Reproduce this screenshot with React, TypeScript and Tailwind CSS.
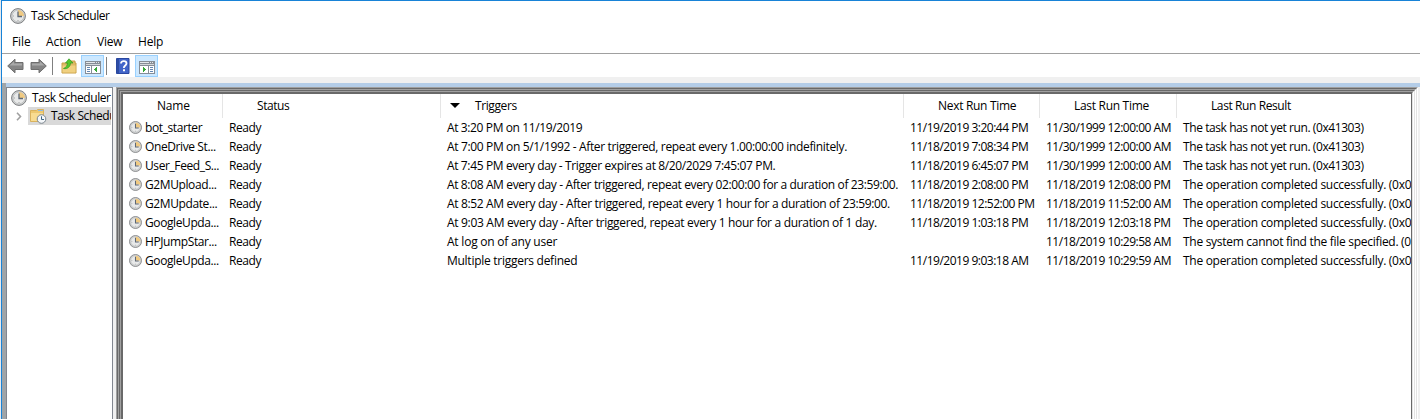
import type { ReactNode } from "react";

function Clock({ size }: { size: number }) {
  return (
    <svg width={size} height={size} viewBox="0 0 16 16" className="shrink-0">
      <circle cx="8" cy="8" r="7.4" fill="#cfd1d2" stroke="#7b7d7f" strokeWidth="1" />
      <circle cx="8" cy="8" r="5.8" fill="#e8e9e9" stroke="#b9bbbc" strokeWidth=".7" />
      <path d="M8 8V2A6 6 0 0 1 14 8Z" fill="#f0ca82" />
      <path d="M8 3.500V8.500H12" fill="none" stroke="#5d6774" strokeWidth="1.300" />
      <path d="M3 8h1M8 12v1" stroke="#a5a5a5" />
    </svg>
  );
}

function Arrow({ flip = false }: { flip?: boolean }) {
  return (
    <svg width="17" height="16" viewBox="0 0 17 16" className={flip ? "-scale-x-100" : ""}>
      <path d="M.7 8 8 1.200V4.500h8v7H8v3.300Z" fill="#858585" stroke="#6e6e6e" />
      <path d="M2.500 7.600 7 3.500V5.600H15v2Z" fill="#a9a9a9" />
    </svg>
  );
}

function FolderUp() {
  return (
    <svg width="16" height="16" viewBox="0 0 16 16">
      <path d="M1 5h7l1-2h5v2h1v10H1Z" fill="#dcb865" stroke="#c9a046" />
      <path d="M1.500 7.500h13V14.500h-13Z" fill="#f0d080" />
      <path d="M2.500 10.500C5 9.500 6.500 7.500 6.500 5H4.500L8 .8 12 5h-2.500C9.500 8.500 6.500 11.500 2.500 10.500Z" fill="#55c82c" stroke="#319a22" strokeWidth=".7" />
    </svg>
  );
}

function PaneIcon({ right = false }: { right?: boolean }) {
  return (
    <svg width="16" height="13" viewBox="0 0 16 13" shapeRendering="crispEdges" className="mt-[3px]">
      <path d="M0 0h16v13H0Z" fill="#868d96" />
      <path d="M1 1h9v1H1ZM11 1h1v1h-1ZM13 1h1v1h-1Z" fill="#e4e7ea" />
      <path d="M1 3h14v1H1Z" fill="#d4d7db" />
      <path d="M1 5h14v7H1Z" fill="#fff" />
      <g transform={right ? "matrix(-1 0 0 1 16 0)" : undefined}>
        <path d="M6 5h1v7H6Z" fill="#868d96" />
        <path d="M2 6h3v1H2ZM2 8h3v1H2ZM2 10h3v1H2Z" fill="#6286b3" />
        <path d="M12 6v5L9 8.500Z" fill="#35a735" />
      </g>
    </svg>
  );
}

function HelpIcon() {
  return (
    <svg width="14" height="16" viewBox="0 0 14 16">
      <path d="M.5.500h12.500v15H.5Z" fill="#4265c9" stroke="#2947a0" />
      <path d="M1 1h2v14H1Z" fill="#2d4ca3" />
      <path d="M5 5.500C5 2.400 10.500 2.400 10.500 5.500 10.500 7.500 7.800 7.500 7.800 10" fill="none" stroke="#fff" strokeWidth="1.800" />
      <path d="M7 11.300h2v2H7Z" fill="#fff" />
    </svg>
  );
}

function TaskFolder() {
  return (
    <svg width="17" height="16" viewBox="0 0 17 16" className="shrink-0">
      <path d="M.5 2.500h6l1-1h6v12H.5Z" fill="#edc86f" stroke="#d9b25d" />
      <path d="M8 2h5v1H8Z" fill="#8fbbe0" />
      <path d="M1 5h12v8H1Z" fill="#f8dc91" />
      <circle cx="11.500" cy="11" r="4.300" fill="#f4f7fa" stroke="#7a858e" />
      <path d="M11.500 8.300V11.500H14" fill="none" stroke="#3c6685" />
    </svg>
  );
}

const columns = [
  { label: "Name", cell: "w-[100px] tracking-[-0.2px]" },
  { label: "Status", cell: "w-[218px] tracking-[-0.45px]" },
  { label: "Triggers", cell: "w-[463px] tracking-[-0.4px]" },
  { label: "Next Run Time", cell: "w-[136px] tracking-[-0.3px]" },
  { label: "Last Run Time", cell: "w-[137px] tracking-[-0.3px]" },
];

const notRun = "The task has not yet run. (0x41303)";
const completed = "The operation completed successfully. (0x0)";

const tasks = [
  { name: "bot_starter", trigger: "At 3:20 PM on 11/19/2019", fit: "tracking-[-0.38px]", next: "11/19/2019 3:20:44 PM", last: "11/30/1999 12:00:00 AM", result: notRun },
  { name: "OneDrive St...", trigger: "At 7:00 PM on 5/1/1992 - After triggered, repeat every 1.00:00:00 indefinitely.", fit: "tracking-[-0.35px]", next: "11/18/2019 7:08:34 PM", last: "11/30/1999 12:00:00 AM", result: notRun },
  { name: "User_Feed_S...", trigger: "At 7:45 PM every day - Trigger expires at 8/20/2029 7:45:07 PM.", fit: "tracking-[-0.37px]", next: "11/18/2019 6:45:07 PM", last: "11/30/1999 12:00:00 AM", result: notRun },
  { name: "G2MUpload...", trigger: "At 8:08 AM every day - After triggered, repeat every 02:00:00 for a duration of 23:59:00.", fit: "tracking-[-0.37px]", next: "11/18/2019 2:08:00 PM", last: "11/18/2019 12:08:00 PM", result: completed },
  { name: "G2MUpdate...", trigger: "At 8:52 AM every day - After triggered, repeat every 1 hour for a duration of 23:59:00.", fit: "tracking-[-0.35px]", next: "11/18/2019 12:52:00 PM", last: "11/18/2019 11:52:00 AM", result: completed },
  { name: "GoogleUpda...", trigger: "At 9:03 AM every day - After triggered, repeat every 1 hour for a duration of 1 day.", fit: "tracking-[-0.31px]", next: "11/18/2019 1:03:18 PM", last: "11/18/2019 12:03:18 PM", result: completed },
  { name: "HPJumpStar...", trigger: "At log on of any user", fit: "tracking-[-0.22px]", next: "", last: "11/18/2019 10:29:58 AM", result: "The system cannot find the file specified. (0x" },
  { name: "GoogleUpda...", trigger: "Multiple triggers defined", fit: "tracking-[-0.27px]", next: "11/19/2019 9:03:18 AM", last: "11/18/2019 10:29:59 AM", result: completed },
];

function SunkenEdge({ children }: { children: ReactNode }) {
  return (
    <div className="flex min-w-0 flex-1 border-t border-r border-l border-t-[#a0a0a0] border-r-white border-l-[#a0a0a0]">
      <div className="flex min-w-0 flex-1 border-t border-r border-l border-t-[#696969] border-r-[#e3e3e3] border-l-[#696969]">{children}</div>
    </div>
  );
}

export default function App() {
  return (
    <div className="flex h-[419px] w-[1420px] overflow-hidden bg-[#e6e9ee] pl-px font-['Open_Sans',sans-serif] text-[12px] leading-4 whitespace-nowrap text-black">
      <div className="flex min-w-0 flex-1 flex-col border-t border-l border-[#1883d7] bg-white">
        <header className="flex h-[29px] shrink-0 items-center gap-[5px] pl-2">
          <Clock size={16} />
          <span className="tracking-[-0.4px]">Task Scheduler</span>
        </header>
        <nav className="flex h-[23px] shrink-0 items-center pl-[10px]">
          <span className="w-[34px] tracking-[-0.1px]">File</span>
          <span className="w-[51px]">Action</span>
          <span className="w-[41px] tracking-[-0.2px]">View</span>
          <span className="tracking-[-0.2px]">Help</span>
        </nav>
        <div className="flex h-[24px] shrink-0 items-center border-t border-[#a0a0a0] pl-[5px]">
          <Arrow />
          <span className="w-[6px]" />
          <Arrow flip />
          <span className="ml-[5px] h-[18px] w-px bg-[#808080]" />
          <span className="ml-2"><FolderUp /></span>
          <span className="ml-1 flex h-[22px] w-[23px] items-center justify-center border border-[#99d1ff] bg-[#cce8ff]"><PaneIcon /></span>
          <span className="ml-[2px] h-[18px] w-px bg-[#808080]" />
          <span className="ml-[9px]"><HelpIcon /></span>
          <span className="ml-[5px] flex h-[22px] w-[23px] items-center justify-center border border-[#99d1ff] bg-[#cce8ff]"><PaneIcon right /></span>
        </div>
        <div className="h-[6px] shrink-0 bg-[#f0f0f0]" />
        <div className="flex min-h-0 flex-1">
          <div className="w-1 bg-[#a0a5a8]" />
          <div className="flex min-w-0 flex-1 flex-col bg-[#f0f0f0]">
            <div className="h-1 shrink-0 bg-[#b4cde8]" />
            <div className="flex min-h-0 flex-1">
              <aside className="w-[107px] shrink-0 overflow-hidden border-x border-t border-[#828790] bg-white pr-px">
                <div className="flex h-[19px] items-center gap-[5px] pl-1">
                  <Clock size={16} />
                  <span className="tracking-[-0.4px]">Task Scheduler</span>
                </div>
                <div className="flex h-[18px] items-center">
                  <svg width="6" height="9" viewBox="0 0 6 9" className="ml-[9px] shrink-0"><path d="m1 .8 3.500 3.700L1 8.200" fill="none" stroke="#a0a0a0" strokeWidth="1.600" /></svg>
                  <div className="ml-[6px] flex h-[18px] min-w-0 flex-1 items-center gap-1 overflow-hidden bg-[#d9d9d9] pl-[2px]">
                    <TaskFolder />
                    <span className="tracking-[-0.4px]">Task Scheduler Library</span>
                  </div>
                </div>
              </aside>
              <main className="mr-[2px] ml-[3px] flex min-w-0 flex-1">
                <SunkenEdge><SunkenEdge><SunkenEdge>
                  <div className="flex min-w-0 flex-1 flex-col overflow-hidden border-x border-t border-[#696969] bg-white">
                    <div className="flex h-6 shrink-0">
                      {columns.map((c) => (
                        <div key={c.label} className={"relative flex shrink-0 items-center border-r border-[#e5e5e5] pl-[34px] " + c.cell}>
                          {c.label === "Triggers" && (
                            <svg width="10" height="5" viewBox="0 0 10 5" className="absolute top-[9px] left-[9px]"><path d="M0 0h10L5 5Z" /></svg>
                          )}
                          {c.label}
                        </div>
                      ))}
                      <div className="flex items-center pl-[34px] tracking-[-0.4px]">Last Run Result</div>
                    </div>
                    {tasks.map((t, i) => (
                      <div key={i} className="flex h-[19px] shrink-0 items-center">
                        <div className="flex w-[106px] shrink-0 items-center gap-[3px] pl-1.5 tracking-[-0.4px]"><Clock size={13} />{t.name}</div>
                        <div className="w-[218px] shrink-0 tracking-[-0.4px]">Ready</div>
                        <div className={"w-[463px] shrink-0 " + t.fit}>{t.trigger}</div>
                        <div className="w-[136px] shrink-0 tracking-[-0.49px]">{t.next}</div>
                        <div className="w-[137px] shrink-0 tracking-[-0.49px]">{t.last}</div>
                        <div className={t.result === notRun ? "tracking-[-0.42px]" : "tracking-[-0.29px]"}>{t.result}</div>
                      </div>
                    ))}
                  </div>
                </SunkenEdge></SunkenEdge></SunkenEdge>
              </main>
            </div>
          </div>
        </div>
      </div>
    </div>
  );
}
